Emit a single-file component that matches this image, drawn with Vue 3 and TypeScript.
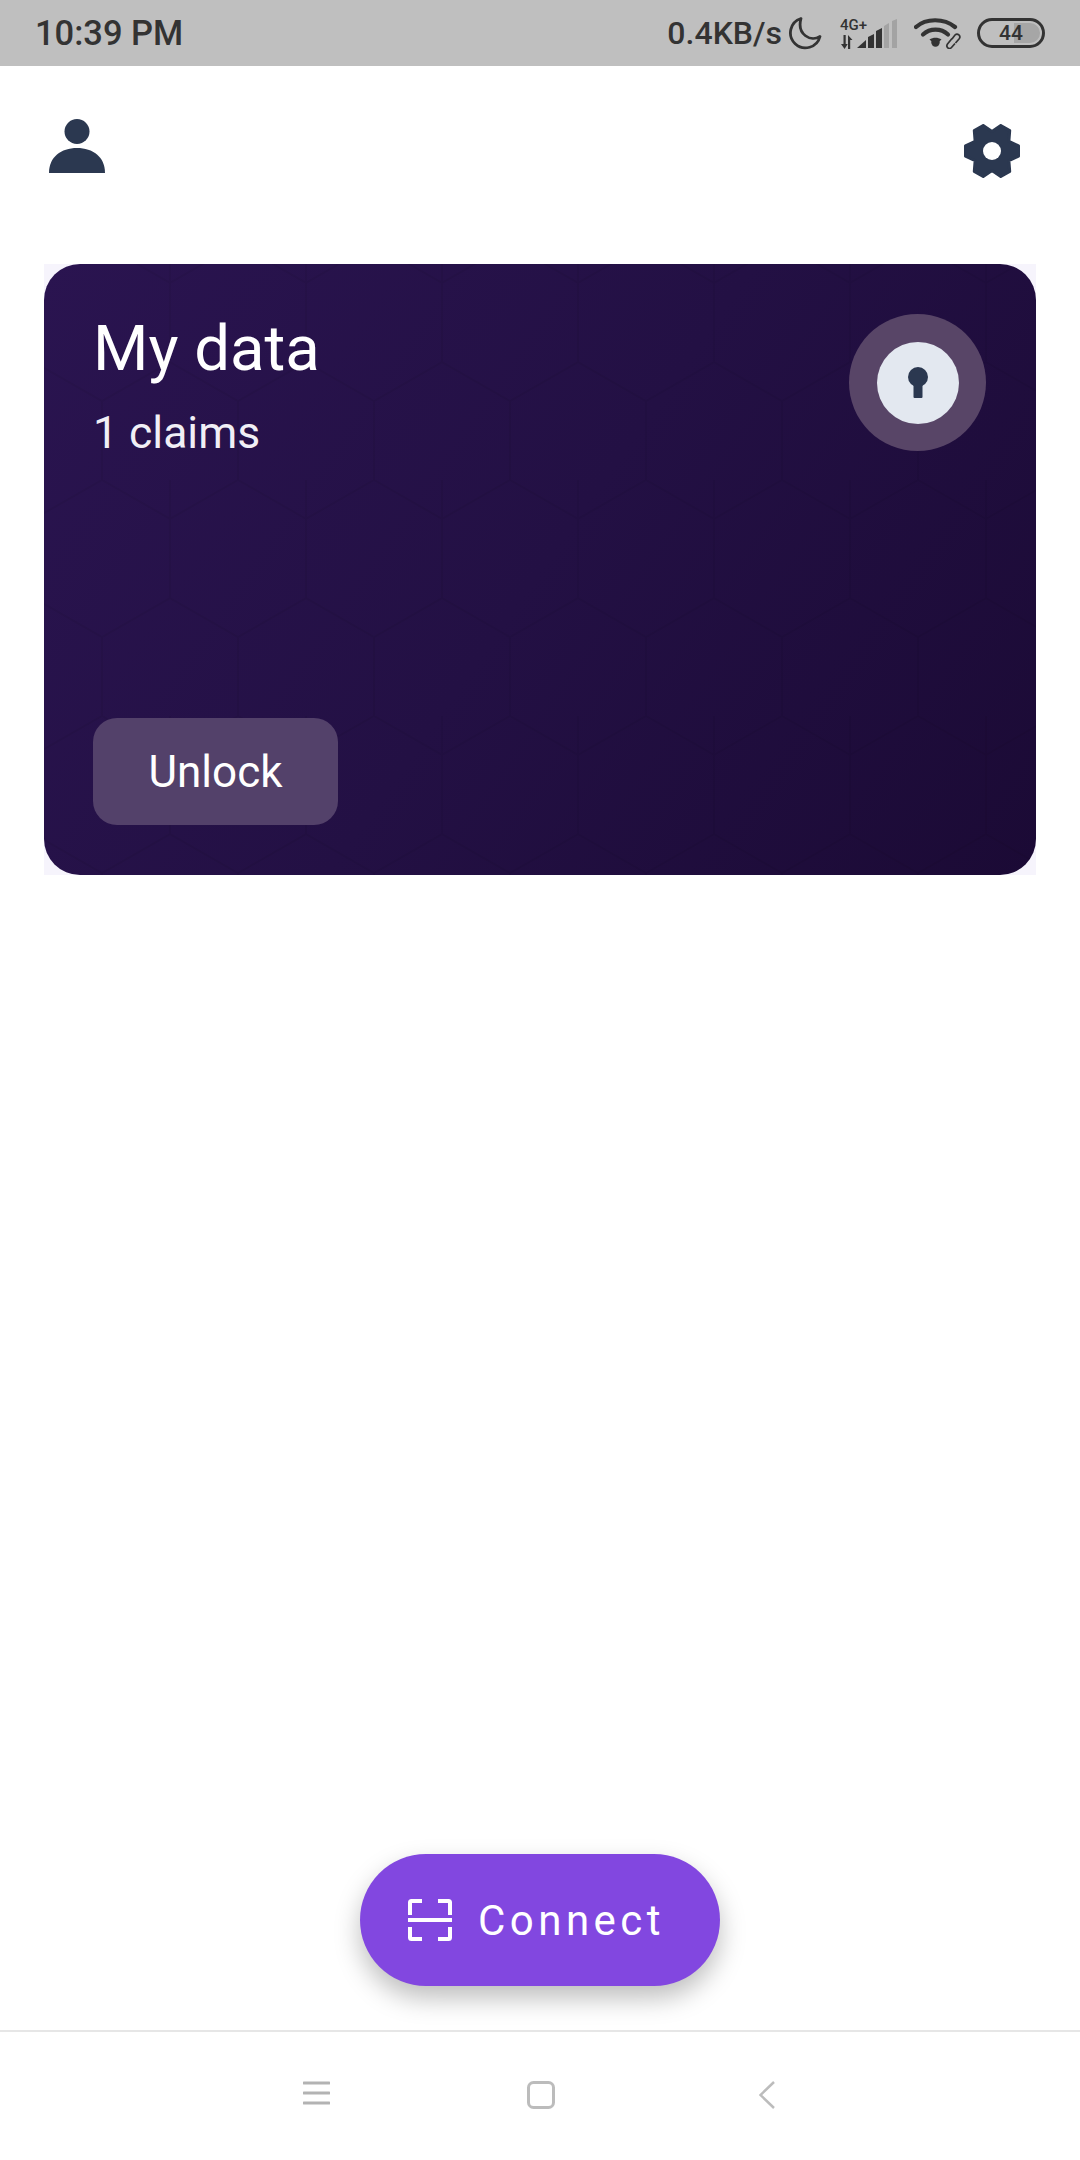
<script setup lang="ts">
const toothAngles: number[] = [0, 60, 120, 180, 240, 300];
const pt = (r: number, deg: number): string => {
  const a = (deg * Math.PI) / 180;
  return `${(28 + r * Math.cos(a)).toFixed(2)} ${(27 + r * Math.sin(a)).toFixed(2)}`;
};
const gearPath: string =
  'M' +
  toothAngles
    .map((a) => `${pt(27, a - 11)} L${pt(27, a + 11)} L${pt(19.5, a + 30)}`)
    .join(' L') +
  ' Z';
</script>

<template>
  <div class="screen">
    <div class="status">
      <span class="time">10:39 PM</span>
      <div class="status-right">
        <span class="speed">0.4KB/s</span>
        <svg class="moon" width="34" height="34" viewBox="0 0 34 34" fill="none">
          <path d="M13 2.500A15 15 0 1 0 32 20.500C23 26 8.500 19 13 2.500Z" stroke="#333" stroke-width="2.800" stroke-linejoin="round" />
        </svg>
        <div class="signal">
          <span class="net">4G+</span>
          <svg class="arrows" width="13" height="14" viewBox="0 0 13 14">
            <path d="M3.500 0h2.200v9h2L4.600 14 1 9h2.500zM8 14V0l4.500 5H10.200v9z" fill="#333" />
          </svg>
          <svg class="bars" width="41" height="30" viewBox="0 0 41 30">
            <path d="M0 29L9 21V29Z" fill="#333" />
            <path d="M11 18L17 15V29H11Z" fill="#333" />
            <path d="M19 12L25 9V29H19Z" fill="#333" />
            <path d="M27 7L32 4V29H27Z" fill="#a3a3a3" />
            <path d="M35 2L40 0V29H35Z" fill="#a3a3a3" />
          </svg>
        </div>
        <svg class="wifi" width="48" height="32" viewBox="0 0 48 32" fill="none">
          <path d="M2 10C12 1 30 1 41 10" stroke="#333" stroke-width="4.200" stroke-linecap="round" />
          <path d="M9 17.500C16 11 27 11 34 17.500" stroke="#333" stroke-width="4.200" stroke-linecap="round" />
          <circle cx="21.500" cy="25.500" r="4.200" fill="#333" />
          <path d="M15.500 22.500C19 20 24 20 27.500 22.500L21.500 28Z" fill="#333" />
          <g transform="translate(0 1)">
            <path d="M38 21l3-4c2.500-2.500 6.500 1 4 4l-3.500 4" stroke="#333" stroke-width="1.700" />
            <path d="M38 20.500l-4.500 5.500c-2 3 1.500 6 4 3.500l3.500-4" stroke="#333" stroke-width="1.700" />
          </g>
        </svg>
        <div class="battery">
          <span class="battery-fill"></span>
          <span class="battery-num">44</span>
        </div>
      </div>
    </div>

    <header class="top">
      <svg class="person" width="56" height="54" viewBox="0 0 56 54">
        <circle cx="28" cy="12.500" r="12.500" fill="#2b3850" />
        <path d="M0 54C0 38 12 29 28 29S56 38 56 54Z" fill="#2b3850" />
      </svg>
      <svg class="gear" width="56" height="54" viewBox="0 0 56 54">
        <path :d="gearPath" fill="#2b3850" stroke="#2b3850" stroke-width="3" stroke-linejoin="round" />
        <circle cx="28" cy="27" r="9" fill="#fff" />
      </svg>
    </header>

    <section class="card-wrap">
      <div class="card">
        <svg class="hex" width="992" height="611" aria-hidden="true">
          <defs>
            <pattern id="hexes" width="136" height="236" patternUnits="userSpaceOnUse" x="-10" y="-20">
              <path d="M68 0L136 39V118L68 157L0 118V39Z M68 157V236 M0 39V0 M136 39V0" fill="none" stroke="rgba(0,0,0,0.05)" stroke-width="2" />
            </pattern>
          </defs>
          <rect width="992" height="611" fill="url(#hexes)" />
        </svg>
        <div class="card-top">
          <div>
            <h1 class="title">My data</h1>
            <p class="claims">1 claims</p>
          </div>
          <div class="lock-outer">
            <div class="lock-inner">
              <svg width="20" height="32" viewBox="0 0 20 32">
                <circle cx="10" cy="10" r="10" fill="#2b3850" />
                <path d="M5.500 12h9v18a1 1 0 0 1-1 1h-7a1 1 0 0 1-1-1z" fill="#2b3850" />
              </svg>
            </div>
          </div>
        </div>
        <button class="unlock" type="button">Unlock</button>
      </div>
    </section>

    <main class="fill"></main>

    <div class="fab-row">
      <button class="fab" type="button">
        <svg width="44" height="42" viewBox="0 0 44 42" fill="none">
          <path d="M2 16V3.500A1.500 1.500 0 0 1 3.500 2H14M30 2h10.500A1.500 1.500 0 0 1 42 3.500V16M2 28v10.500A1.500 1.500 0 0 0 3.500 40H14M30 40h10.500a1.500 1.500 0 0 0 1.500-1.500V28" stroke="#fff" stroke-width="4" />
          <path d="M0 21h44" stroke="#fff" stroke-width="4" />
        </svg>
        <span>Connect</span>
      </button>
    </div>

    <nav class="nav">
      <svg width="27" height="24" viewBox="0 0 27 24" fill="none">
        <path d="M1 2h25M1 12h25M1 22h25" stroke="#b3b3b3" stroke-width="3" stroke-linecap="round" />
      </svg>
      <svg class="home" width="28" height="28" viewBox="0 0 28 28" fill="none">
        <rect x="1.500" y="1.500" width="25" height="25" rx="5" stroke="#bcbcbc" stroke-width="3" />
      </svg>
      <svg width="16" height="28" viewBox="0 0 16 28" fill="none">
        <path d="M15 1L1.500 14L15 27" stroke="#bcbcbc" stroke-width="2.500" />
      </svg>
    </nav>
  </div>
</template>

<style scoped>
.screen {
  width: 1080px;
  height: 2160px;
  display: flex;
  flex-direction: column;
  background: #fff;
  font-family: Roboto, "Liberation Sans", sans-serif;
  overflow: hidden;
}
.status {
  height: 66px;
  flex: none;
  background: #bfbfbf;
  color: #333;
  display: flex;
  align-items: center;
  justify-content: space-between;
  padding: 0 35px;
}
.time {
  font-size: 34.500px;
  font-weight: 500;
}
.status-right {
  display: flex;
  align-items: center;
}
.speed {
  font-size: 32px;
  font-weight: 500;
  margin-right: 6px;
}
.moon {
  margin-right: 18px;
}
.signal {
  position: relative;
  width: 58px;
  height: 32px;
  margin-right: 16px;
}
.net {
  position: absolute;
  left: 0;
  top: 0;
  font-size: 15px;
  line-height: 16px;
  font-weight: 500;
}
.arrows {
  position: absolute;
  left: 0;
  bottom: 0;
}
.bars {
  position: absolute;
  left: 17px;
  bottom: 0;
}
.wifi {
  margin-right: 15px;
}
.battery {
  position: relative;
  width: 68px;
  height: 30px;
  box-sizing: border-box;
  border: 3px solid #333;
  border-radius: 15px;
  display: flex;
  align-items: center;
  justify-content: center;
}
.battery-fill {
  position: absolute;
  right: 2px;
  top: 2px;
  bottom: 2px;
  width: 26px;
  background: #a6a6a6;
  border-radius: 0 10px 10px 0;
}
.battery-num {
  position: relative;
  font-size: 21px;
  font-weight: 500;
}
.top {
  height: 198px;
  flex: none;
  box-sizing: border-box;
  display: flex;
  justify-content: space-between;
  align-items: flex-start;
  padding: 53px 60px 0 49px;
}
.gear {
  margin-top: 5px;
}
.card-wrap {
  flex: none;
  margin: 0 44px;
  height: 611px;
  background: #f6f4fc;
}
.card {
  position: relative;
  overflow: hidden;
  height: 100%;
  box-sizing: border-box;
  border-radius: 36px;
  background: linear-gradient(125deg, #2a1450 0%, #231044 50%, #1b0a35 100%);
  padding: 50px 50px 50px 49px;
  display: flex;
  flex-direction: column;
  justify-content: space-between;
  align-items: flex-start;
  color: #fff;
}
.hex {
  position: absolute;
  left: 0;
  top: 0;
}
.card-top {
  position: relative;
  width: 100%;
  display: flex;
  justify-content: space-between;
  align-items: flex-start;
}
.title {
  margin: 0;
  font-size: 63.500px;
  line-height: 70px;
  font-weight: 400;
}
.claims {
  margin: 24px 0 0;
  font-size: 44.500px;
  line-height: 50px;
  color: #f1eff6;
}
.lock-outer {
  width: 137px;
  height: 137px;
  border-radius: 50%;
  background: #584567;
  display: flex;
  align-items: center;
  justify-content: center;
}
.lock-inner {
  width: 82px;
  height: 82px;
  border-radius: 50%;
  background: #e3e8f0;
  display: flex;
  align-items: center;
  justify-content: center;
}
.unlock {
  position: relative;
  width: 245px;
  height: 107px;
  border: 0;
  border-radius: 24px;
  background: #53416a;
  color: #fff;
  font: 400 44px Roboto, "Liberation Sans", sans-serif;
  padding: 0;
}
.fill {
  flex: 1;
}
.fab-row {
  flex: none;
  display: flex;
  justify-content: center;
  margin-bottom: 44px;
}
.fab {
  width: 360px;
  height: 132px;
  border: 0;
  border-radius: 66px;
  background: #8247e0;
  color: #fff;
  display: flex;
  align-items: center;
  justify-content: center;
  gap: 26px;
  padding: 0 7px 0 0;
  box-shadow: 0 12px 26px rgba(0, 0, 0, 0.26);
  font: 400 42px Roboto, "Liberation Sans", sans-serif;
  letter-spacing: 4.500px;
}
.nav {
  flex: none;
  height: 130px;
  box-sizing: border-box;
  border-top: 2px solid #e6e6e6;
  padding: 49px 305px 0 303px;
  display: flex;
  justify-content: space-between;
  align-items: flex-start;
}
.home {
  position: relative;
  left: -4px;
}
</style>
